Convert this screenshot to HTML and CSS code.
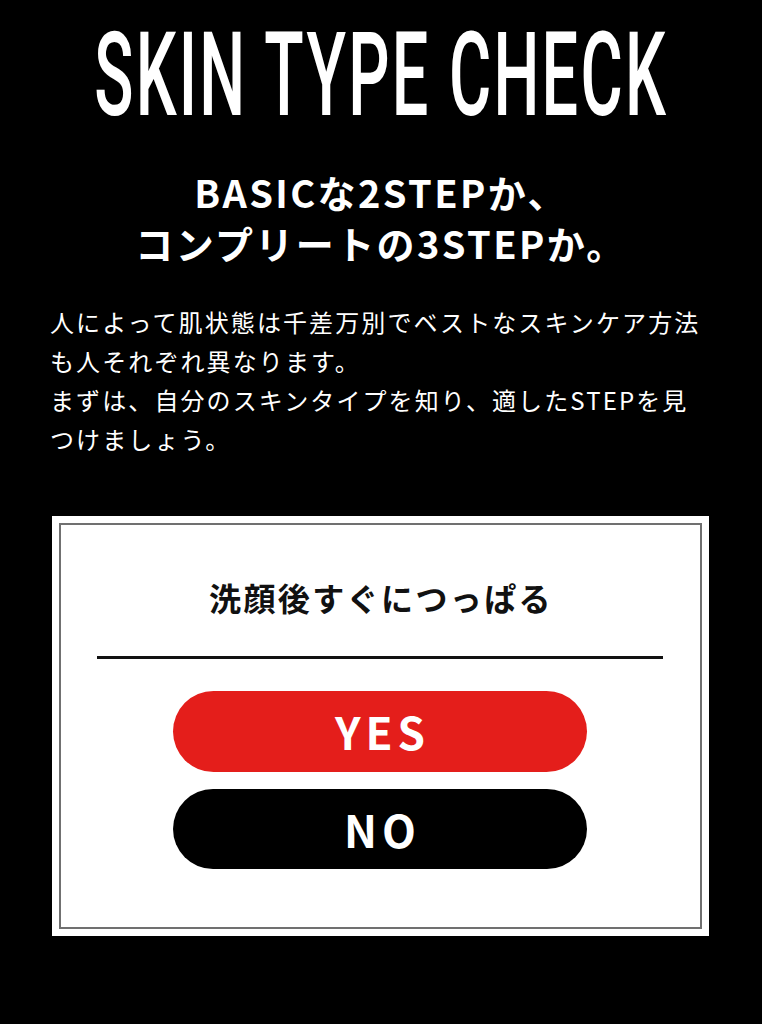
FILE: index.html
```html
<!DOCTYPE html>
<html lang="ja">
<head>
<meta charset="utf-8">
<title>SKIN TYPE CHECK</title>
<link rel="stylesheet" href="styles.css">
</head>
<body>
<main class="page">
  <h1 class="title"><span class="title-text">SKIN TYPE CHECK</span></h1>
  <h2 class="lead">BASICな2STEPか、<br>コンプリートの3STEPか。</h2>
  <p class="intro">人によって肌状態は千差万別でベストなスキンケア方法も人それぞれ異なります。<br>まずは、自分のスキンタイプを知り、適したSTEPを見つけましょう。</p>
  <section class="card">
    <div class="card-inner">
      <p class="question">洗顔後すぐにつっぱる</p>
      <hr class="divider">
      <div class="answers">
        <button class="btn btn-yes" type="button">YES</button>
        <button class="btn btn-no" type="button">NO</button>
      </div>
    </div>
  </section>
</main>
</body>
</html>
```
FILE: styles.css
```css
html, body {
  margin: 0;
  padding: 0;
  background: #000;
}
body {
  width: 762px;
  height: 1024px;
  overflow: hidden;
  color: #fff;
  font-family: "Noto Sans CJK JP", "Noto Sans", sans-serif;
}
.page {
  display: flex;
  flex-direction: column;
  align-items: stretch;
}
.title {
  margin: 19px 0 0;
  height: 112px;
  display: flex;
  justify-content: center;
  font-family: Roboto, "Liberation Sans", sans-serif;
  font-weight: 500;
  font-size: 116px;
  line-height: 112px;
  letter-spacing: 4px;
  overflow: visible;
}
.title-text {
  display: inline-block;
  white-space: nowrap;
  transform: scaleX(0.558);
  transform-origin: center;
}
.lead {
  margin: 35px 0 0;
  text-align: center;
  font-size: 38px;
  font-weight: 700;
  line-height: 51px;
  letter-spacing: 2.4px;
}
.intro {
  margin: 34px 0 0;
  padding: 0 54px 0 50px;
  font-size: 24px;
  font-weight: 400;
  line-height: 39px;
  letter-spacing: 2.1px;
}
.card {
  margin: 58px 0 0 52px;
  width: 657px;
  box-sizing: border-box;
  background: #fff;
  padding: 7px;
}
.card-inner {
  border: 2px solid #707070;
  padding: 48px 37px 58px 36px;
  display: flex;
  flex-direction: column;
  align-items: center;
  color: #111;
}
.question {
  margin: 0;
  font-size: 32px;
  font-weight: 700;
  line-height: 48px;
  letter-spacing: 2.4px;
  padding-left: 2px;
}
.divider {
  align-self: stretch;
  margin: 35px 0 0;
  border: 0;
  height: 3px;
  background: #111;
}
.answers {
  margin-top: 32px;
  display: flex;
  flex-direction: column;
  gap: 17px;
  align-items: center;
}
.btn {
  width: 414px;
  height: 81px;
  border: 0;
  border-radius: 41px;
  color: #fff;
  font-family: "Noto Sans CJK JP", "Noto Sans", sans-serif;
  font-size: 44px;
  font-weight: 700;
  letter-spacing: 5px;
  padding: 0 0 0 5px;
  line-height: 81px;
}
.btn-yes {
  background: #e41e1b;
}
.btn-no {
  background: #000;
  height: 80px;
  line-height: 80px;
}
```
